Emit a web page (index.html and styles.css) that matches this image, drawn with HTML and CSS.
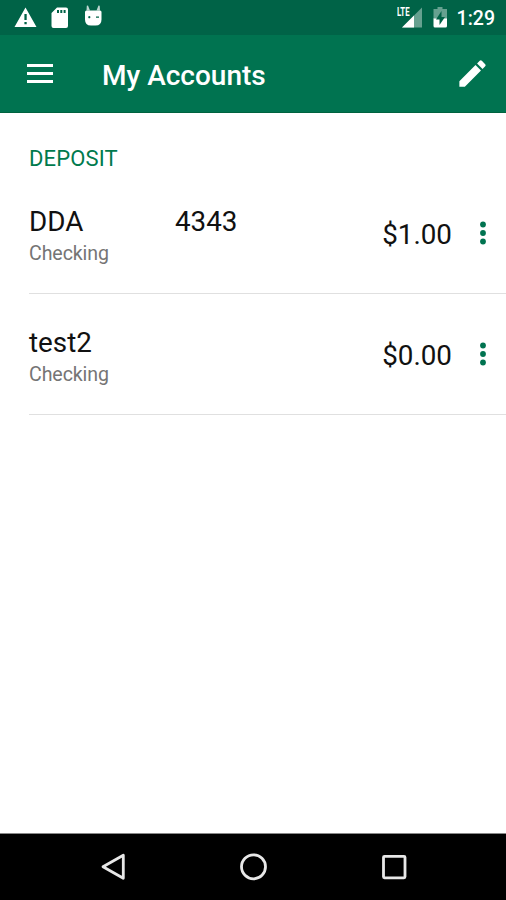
FILE: index.html
```html
<!DOCTYPE html>
<html lang="en">
<head>
<meta charset="utf-8">
<title>My Accounts</title>
<link rel="stylesheet" href="styles.css">
</head>
<body>
<div class="status">
  <svg class="status-icons" width="110" height="35" viewBox="0 0 110 35" fill="#fff">
    <path fill-rule="evenodd" d="M25.5 7.5 36.5 27h-22zM24.4 14v6h2.3v-6zM24.4 22v2.3h2.3V22z"/>
    <path fill-rule="evenodd" d="M57 7.500h9q2 0 2 2V26q0 2-2 2H53.500q-2 0-2-2V13zM57 10v3h2v-3zM60.300 10v3h2v-3zM63.600 10v3h2v-3z"/>
    <path fill-rule="evenodd" d="M85 12q0-1.500 1.500-1.500h13.500q1.500 0 1.500 1.500v7.500q0 6-6 6H91q-6 0-6-6zM89.300 16a1.100 1.100 0 1 0 .01 0zM96 16.500v1.200h3v-1.200z"/>
    <path opacity=".75" d="M86.800 5.800 88 5.500l2 5h-3.500zM98.500 5.500l1.200.3.300 4.700h-3.500z"/>
  </svg>
  <div class="status-right">
    <span class="lte">LTE</span>
    <svg width="56" height="35" viewBox="396 0 56 35" fill="#fff">
      <path opacity=".4" d="M422 7.500V27.500H402z"/>
      <path d="M414 15.500V27.500H402z"/>
      <path opacity=".4" d="M437.500 7h5v2h4.500v10H433.500V9h4z"/>
      <path d="M433.500 18.500H447v7.500q0 1.500-1.500 1.500H435q-1.500 0-1.500-1.500z"/>
      <path fill="#006347" d="M441.500 11v6h3.500l-5.500 8v-5.500H436z"/>
    </svg>
    <span class="clock">1:29</span>
  </div>
</div>
<header class="bar">
  <svg class="menu" width="28" height="22" viewBox="0 0 28 22" fill="#fff"><path d="M1 1h26v3H1zM1 9h26v3H1zM1 17h26v3H1z"/></svg>
  <h1>My Accounts</h1>
  <svg class="edit" width="35" height="35" viewBox="0 0 24 24" fill="#fff"><path d="M3 17.250V21h3.750L17.810 9.940l-3.750-3.750L3 17.250zM20.710 7.040a1 1 0 0 0 0-1.410l-2.340-2.340a1 1 0 0 0-1.410 0l-1.830 1.830 3.750 3.750 1.830-1.830z"/></svg>
</header>
<main>
  <h2>DEPOSIT</h2>
  <div class="row">
    <div class="info">
      <div class="name"><span class="label">DDA</span><span>4343</span></div>
      <div class="kind">Checking</div>
    </div>
    <div class="amount">$1.00</div>
    <svg class="more" width="8" height="24" viewBox="0 0 8 24" fill="#007350"><circle cx="4" cy="3.500" r="2.900"/><circle cx="4" cy="12" r="2.900"/><circle cx="4" cy="20.500" r="2.900"/></svg>
  </div>
  <div class="row">
    <div class="info">
      <div class="name"><span class="label">test2</span></div>
      <div class="kind">Checking</div>
    </div>
    <div class="amount">$0.00</div>
    <svg class="more" width="8" height="24" viewBox="0 0 8 24" fill="#007350"><circle cx="4" cy="3.500" r="2.900"/><circle cx="4" cy="12" r="2.900"/><circle cx="4" cy="20.500" r="2.900"/></svg>
  </div>
</main>
<nav>
  <svg width="506" height="66" viewBox="0 0 506 66" fill="none" stroke="#e8e8e8" stroke-width="2.800" stroke-linejoin="round"><path d="M103 32.800 123.300 21.300V44.300z"/><circle cx="253.500" cy="32.800" r="12"/><rect x="383.500" y="22.300" width="21.500" height="21.500" rx="1"/></svg>
</nav>
</body>
</html>
```
FILE: styles.css
```css
* { box-sizing: border-box; }
body {
  margin: 0;
  height: 900px;
  display: flex;
  flex-direction: column;
  background: #fff;
  font-family: Roboto, sans-serif;
  color: #111;
  overflow: hidden;
}
.status {
  height: 35px;
  display: flex;
  justify-content: space-between;
  background: #006347;
  color: #fff;
}
.status svg { display: block; }
.status-right { display: flex; position: relative; padding-right: 11px; }
.lte {
  position: absolute;
  left: 1px;
  top: 6px;
  font-size: 12px;
  line-height: 12px;
  font-weight: 700;
  transform: scaleX(.65);
  transform-origin: left;
}
.clock {
  margin-left: 5px;
  font-size: 19.5px;
  font-weight: 500;
  line-height: 37px;
}
.bar {
  height: 78px;
  display: flex;
  align-items: center;
  padding: 0 16px 0 26px;
  background: #007350;
  border-bottom: 1px solid #00633f;
  color: #fff;
}
h1 {
  margin: 5px 0 0 48px;
  font-size: 28px;
  font-weight: 500;
  line-height: 34px;
}
.edit { margin-left: auto; }
main { flex: 1; padding: 32px 0 0 29px; }
h2 {
  margin: 0;
  font-size: 22px;
  font-weight: 400;
  line-height: 28px;
  letter-spacing: .15px;
  color: #007a4d;
}
.row {
  height: 121.5px;
  display: flex;
  padding: 32px 19px 0 0;
  border-bottom: 1px solid #e0e0e0;
}
h2 + .row { height: 120.5px; }
.info { flex: 1; }
.name { display: flex; font-size: 27.8px; line-height: 34px; }
.label { width: 146px; }
.kind { margin-top: 1px; font-size: 19.6px; line-height: 28px; letter-spacing: -.1px; color: #757575; }
.amount { margin-top: 13px; font-size: 27.8px; line-height: 34px; }
.more { margin: 16px 0 0 27px; }
nav { height: 67px; background: #000; border-top: 1px solid #888; }
nav svg { display: block; }
```
